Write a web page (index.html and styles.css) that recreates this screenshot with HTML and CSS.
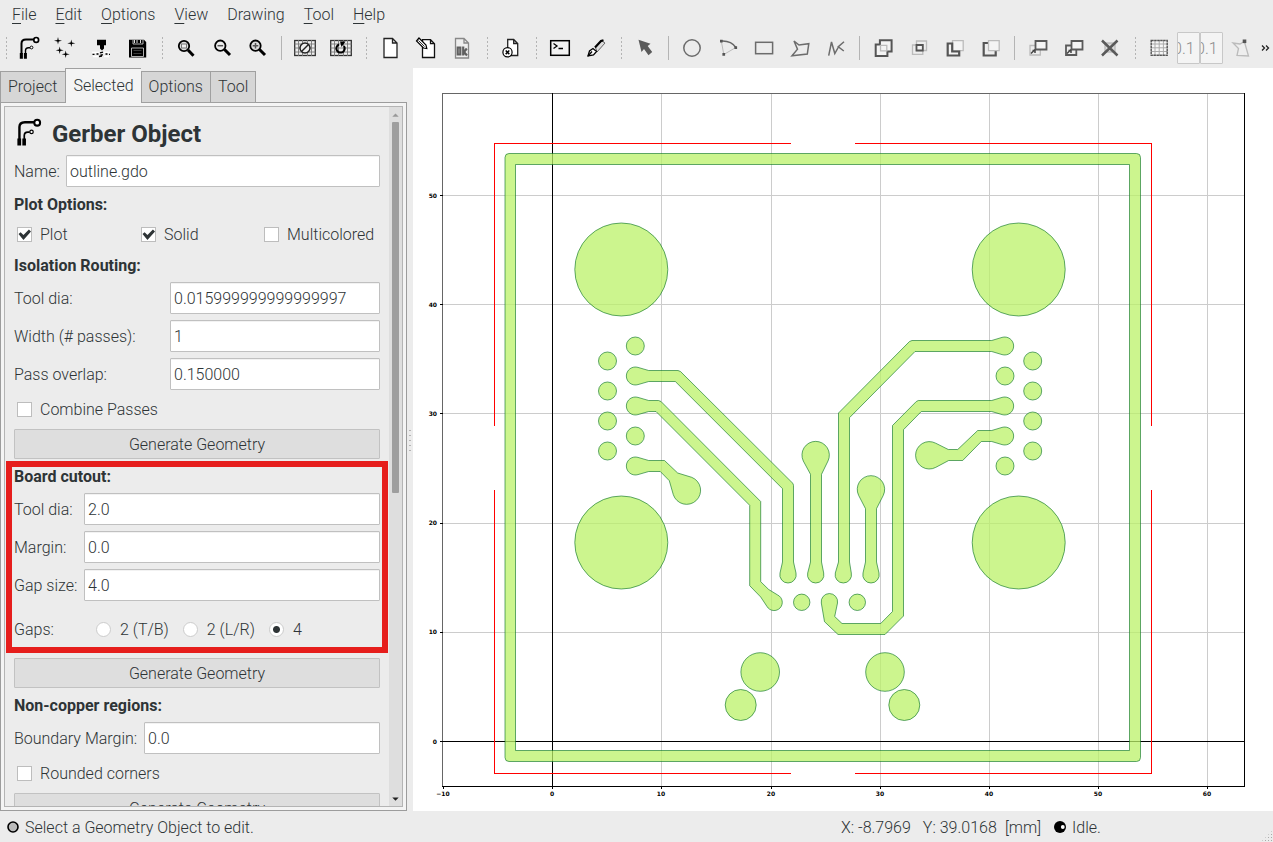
FILE: index.html
```html
<!DOCTYPE html>
<html lang="en">
<head>
<meta charset="utf-8">
<meta name="viewport" content="width=device-width, initial-scale=1">
<title>FlatCAM</title>
<link rel="stylesheet" href="styles.css">
</head>
<body>
<svg class="defs" aria-hidden="true">
  <defs>
    <symbol id="i-gerber" viewBox="0 0 24 24"><path d="M4.500 18V7.500q0-4 4.500-4H17" fill="none" stroke="#000" stroke-width="2"/><path d="M8.500 18v-3.500q0-2.800 3-2.800H13" fill="none" stroke="#000" stroke-width="1.400"/><circle cx="19.200" cy="3.900" r="2.400" fill="#fff" stroke="#000" stroke-width="1.700"/><circle cx="14.500" cy="11.500" r="1.400" fill="#fff" stroke="#000"/><path d="M2.800 17h3.100v5.700H2.800zM6.900 17h3v5.700h-3z"/></symbol>
    <symbol id="i-doc" viewBox="0 0 24 24"><path d="M6 2.500h8.500l4.500 4.500v14.500H6zM14.500 2.500V7H19" fill="#fff" stroke="currentColor" stroke-width="1.300"/></symbol>
    <symbol id="i-mesh" viewBox="0 0 24 24"><rect x="1.700" y="4.500" width="20.600" height="15" fill="#eee" stroke="#333" stroke-width="1.300"/><path d="M5.500 4v16M9.500 4v16M14.500 4v16M18.500 4v16M1.500 8h21M1.500 12h21M1.500 16h21" stroke="#777" stroke-width=".9"/></symbol>
  </defs>
</svg>

<nav class="menubar" aria-label="Menu">
  <button type="button"><u>F</u>ile</button>
  <button type="button"><u>E</u>dit</button>
  <button type="button"><u>O</u>ptions</button>
  <button type="button"><u>V</u>iew</button>
  <button type="button">Drawing</button>
  <button type="button"><u>T</u>ool</button>
  <button type="button"><u>H</u>elp</button>
</nav>

<div class="toolbar" role="toolbar" aria-label="Tools">
  <span class="grip"></span>
  <button type="button" aria-label="Open Gerber"><svg><use href="#i-gerber"/></svg></button>
  <button type="button" aria-label="Open Excellon"><svg viewBox="0 0 24 24"><path d="M5 1l.700 3L9 4.700l-3.300.7L5 8.500l-.7-3.100L1 4.700 4.300 4zM18.300 3.500l.7 3 3.300.7-3.300.7-.7 3.100-.7-3.100-3.300-.7 3.300-.7zM6.700 10.500l.7 3 3.300.7-3.300.7-.7 3.100-.7-3.100-3.300-.7 3.300-.7zM12.700 14.500l.7 3 3.300.7-3.300.7-.7 3.100-.7-3.100-3.300-.7 3.300-.7z"/></svg></button>
  <button type="button" aria-label="Open G-Code"><svg viewBox="0 0 24 24"><path d="M3 16.500h7M15 16.500h6M4 20.500h5m6 0h5" stroke="#fff" stroke-width="1.500"/><path d="M8 3.800h9v5.400h-2v3.300l-2 2-2-2V9.200H8z"/><path d="M3.500 18.300h2M7.500 18h2M11 16.800l3-.6M11.500 18.800H14M10 20.500l3-.5M16.500 18h2M20 18.300h1" stroke="#000" stroke-width="1.300"/></svg></button>
  <button type="button" aria-label="Save"><svg viewBox="0 0 24 24"><path d="M4 3.700h15l2.200 2.200v15.500H4z"/><path d="M8 4v4h10V4M6.500 12v8.500h12V12z" fill="none" stroke="#ddd" stroke-width=".8"/><path d="M9.500 4v3M12 4v3M15.500 4v3" stroke="#ddd"/><path d="M8.500 14.500h8m-8 3h8" stroke="#555" stroke-width=".7"/></svg></button>
  <span class="grip"></span>
  <button type="button" aria-label="Zoom fit"><svg viewBox="0 0 24 24"><path d="M14 14l5.500 5.700" stroke="#000" stroke-width="3"/><circle cx="10" cy="10" r="5.200" fill="#ddd" stroke="#000" stroke-width="1.800"/><rect x="7.500" y="8" width="5" height="4" fill="#eee" stroke="#777"/></svg></button>
  <button type="button" aria-label="Zoom out"><svg viewBox="0 0 24 24"><path d="M14.500 13.500L20 19" stroke="#000" stroke-width="3"/><circle cx="10.300" cy="9.700" r="5.200" fill="#eee" stroke="#000" stroke-width="1.800"/><path d="M7.500 9.700h5.600" stroke="#555" stroke-width="1.500"/></svg></button>
  <button type="button" aria-label="Zoom in"><svg viewBox="0 0 24 24"><path d="M13.500 13.500L19 19" stroke="#000" stroke-width="3"/><circle cx="9.500" cy="9.700" r="5.200" fill="#ddd" stroke="#000" stroke-width="1.800"/><path d="M6.700 9.700h5.600M9.500 6.900v5.600" stroke="#555" stroke-width="1.500"/></svg></button>
  <span class="sep"></span>
  <button type="button" aria-label="Clear plot"><svg viewBox="0 0 24 24"><use href="#i-mesh"/><circle cx="12" cy="12" r="5" fill="#eee" stroke="#222" stroke-width="1.500"/><path d="M8.500 15.500l7-7" stroke="#222" stroke-width="1.500"/></svg></button>
  <button type="button" aria-label="Replot"><svg viewBox="0 0 24 24"><use href="#i-mesh"/><path d="M10 8.500a4.200 4.200 0 1 0 5 1.500" fill="none" stroke="#000" stroke-width="2"/><path d="M11 5.500h5.500L12.500 11z"/></svg></button>
  <span class="grip"></span>
  <button type="button" aria-label="New geometry"><svg><use href="#i-doc"/></svg></button>
  <button type="button" aria-label="Edit geometry"><svg viewBox="0 0 24 24"><path d="M8.500 3.700h8l4 4v13.800h-12zM16.500 3.700v4h4" fill="#fff" stroke="#111" stroke-width="1.300"/><path d="M2.500 5l2.500-3 7 7 .8 3.500L9.500 12z" fill="#fff" stroke="#000" stroke-width="1.200"/><path d="M4.500 4.500l6 6" stroke="#000" stroke-width=".8"/></svg></button>
  <button type="button" disabled aria-label="Update geometry"><svg viewBox="0 0 24 24"><path d="M5.500 2.500h8.500l4.500 4.500v15h-13zM14 2.500V7h4.500" fill="#eee" stroke="#888" stroke-width="1.300"/><path d="M7.700 11.500h2.600v7H7.700zM13.200 10.500v9M16.800 12.500L14 16l3 3.500" fill="none" stroke="#606060" stroke-width="2.200"/></svg></button>
  <span class="grip"></span>
  <button type="button" aria-label="Delete object"><svg viewBox="0 0 24 24"><path d="M8.700 3.500h6l4 4v12h-10zM14.700 3.500v4h4" fill="#fff" stroke="#222" stroke-width="1.300"/><circle cx="8.500" cy="16.300" r="4.600" fill="#fff" stroke="#000" stroke-width="1.200"/><path d="M6.700 14.500l3.600 3.600m0-3.600l-3.600 3.600" stroke="#000" stroke-width="1.500"/></svg></button>
  <span class="grip"></span>
  <button type="button" aria-label="Command line"><svg viewBox="0 0 24 24"><rect x="2.700" y="4.700" width="18.600" height="14.600" fill="#f2f2f2" stroke="#000" stroke-width="1.500"/><path d="M5.500 7.500L9 10l-3.500 2.500M10.500 12.500h4.500" fill="none" stroke="#000" stroke-width="1.300"/></svg></button>
  <button type="button" aria-label="New script"><svg viewBox="0 0 24 24"><path d="M11.500 11.500L18 5l3 2-8 9z" fill="#ddd" stroke="#666"/><path d="M11 11.500L17 5l2.500-.7" fill="none" stroke="#000" stroke-width="2.200"/><path d="M4 20l1.500-5 3.500-2.500 3.500 3-3 3.500z" fill="#fff" stroke="#000" stroke-width="1.300"/><path d="M4 20l4-4.500" stroke="#000" stroke-width="1.300"/></svg></button>
  <span class="grip"></span>
  <button type="button" disabled aria-label="Select"><svg viewBox="0 0 24 24"><path d="M5.500 3.700l12 4-2.800 2.300 4.500 6-3.700 3.200-4.500-6.200-2.500 3z" fill="#5a5a5a"/></svg></button>
  <span class="sep"></span>
  <button type="button" disabled aria-label="Add circle"><svg viewBox="0 0 24 24"><circle cx="12" cy="12" r="8.200" fill="none" stroke="#6c6c6c" stroke-width="1.500"/></svg></button>
  <button type="button" disabled aria-label="Add arc"><svg viewBox="0 0 24 24"><path d="M5.300 5l2.500 13.500 12-7" fill="none" stroke="#bbb"/><path d="M5.300 5q10-.5 14.500 6.500" fill="none" stroke="#666" stroke-width="1.400"/><path d="M4 3.700h2.700v2.700H4zM18.400 10.200h2.700v2.700h-2.700zM6.400 17h2.700v2.700H6.400z" fill="#555"/></svg></button>
  <button type="button" disabled aria-label="Add rectangle"><svg viewBox="0 0 24 24"><rect x="3.600" y="6.300" width="17" height="11.400" fill="none" stroke="#6c6c6c" stroke-width="1.500"/></svg></button>
  <button type="button" disabled aria-label="Add polygon"><svg viewBox="0 0 24 24"><path d="M6 5l5 4 9.800-1.300L19.300 18 4 19.700l5.500-6.500z" fill="none" stroke="#6c6c6c" stroke-width="1.500"/></svg></button>
  <button type="button" disabled aria-label="Add path"><svg viewBox="0 0 24 24"><path d="M4.700 20L7.500 6l3.300 12L20 5.500M20 5.500l-6.500 5.500 6.500 4" fill="none" stroke="none"/><path d="M4.700 19.700L7.500 6l3.300 11.500L15 10M20 5.800l-5.700 5 5.500 4.200" fill="none" stroke="#6c6c6c" stroke-width="1.500"/></svg></button>
  <span class="sep"></span>
  <button type="button" disabled aria-label="Union"><svg viewBox="0 0 24 24"><path d="M4.700 8.500h4.200V4.200h11.700v11.300h-4.200v4.600H4.700z" fill="#f4f4f4" stroke="#555" stroke-width="2"/><path d="M9.500 9.300h6.300v5.500H9.500z" fill="none" stroke="#bbb" stroke-width="1.300"/></svg></button>
  <button type="button" disabled aria-label="Intersection"><svg viewBox="0 0 24 24"><path d="M5.500 9h10.300v9.300H5.500zM9.500 5h10v9.500h-10z" fill="#eee" stroke="#bbb" stroke-width="1.300"/><path d="M9.500 9h6.300v5.500H9.500z" fill="#f4f4f4" stroke="#555" stroke-width="1.800"/></svg></button>
  <button type="button" disabled aria-label="Subtraction"><svg viewBox="0 0 24 24"><path d="M9.500 4.700h10.700v10H9.500z" fill="#f4f4f4" stroke="#bbb" stroke-width="1.300"/><path d="M4.700 7.500h4.500v8h7v4H4.700z" fill="#f4f4f4" stroke="#555" stroke-width="2.200"/></svg></button>
  <button type="button" disabled aria-label="Cut path"><svg viewBox="0 0 24 24"><path d="M9 7H4.700v12.500h12V15" fill="#eee" stroke="#555" stroke-width="2.200"/><path d="M9.500 4.700h10.700v10H9.500z" fill="#f4f4f4" stroke="#bbb" stroke-width="1.300"/></svg></button>
  <span class="sep"></span>
  <button type="button" disabled aria-label="Copy objects"><svg viewBox="0 0 24 24"><path d="M4 9.500h10.300V19H4z" fill="#eee" stroke="#bbb" stroke-width="1.300"/><path d="M9.500 5h11v8.500h-11z" fill="#f4f4f4" stroke="#5a5a5a" stroke-width="1.800"/><path d="M5 17.500l4-4M6.500 14.500h2.500v2.500" stroke="#444" stroke-width="1.500" fill="none"/></svg></button>
  <button type="button" disabled aria-label="Move objects"><svg viewBox="0 0 24 24"><path d="M4 9.500h10.300V19H4z" fill="#eee" stroke="#5a5a5a" stroke-width="1.800"/><path d="M9.500 5h11v8.500h-11z" fill="#f4f4f4" stroke="#5a5a5a" stroke-width="1.800"/><path d="M5 17.500l4-4M6.500 14.500h2.500v2.500" stroke="#444" stroke-width="1.500" fill="none"/></svg></button>
  <button type="button" disabled aria-label="Delete shape"><svg viewBox="0 0 24 24"><path d="M7 7h10v9H7z" fill="#ddd" stroke="#aaa"/><path d="M4 4.500l15.500 15M19.500 4.500L4 19.500" stroke="#5a5a5a" stroke-width="2.500"/></svg></button>
  <span class="grip"></span>
  <button type="button" disabled aria-label="Snap to grid"><svg viewBox="0 0 24 24"><rect x="4.200" y="4.500" width="16" height="14.700" fill="#f6f6f6"/><path d="M8 4v15.500M12.200 4v15.500M16.400 4v15.500M4 8h16.500M4 11.800h16.500M4 15.500h16.500" stroke="#aaa"/><rect x="4.200" y="4.500" width="16" height="14.700" fill="none" stroke="#555" stroke-width="1.400" stroke-dasharray="2.500 .5"/></svg></button>
  <input class="snap" type="text" value="0.1" aria-label="Grid X" disabled>
  <input class="snap" type="text" value="0.1" aria-label="Grid Y" disabled>
  <button type="button" disabled aria-label="Snap to corner"><svg viewBox="0 0 24 24"><path d="M14.500 6l-3.500 2-7-1 5.500 5.500L8 19.500l11.500.5L15.500 6" fill="#eee" stroke="#bbb" stroke-width="1.300"/><path d="M13.700 3.500h3.600v3.600h-3.600z" fill="#555"/></svg></button>
  <button class="more" type="button" aria-label="More"><svg viewBox="0 0 12 12"><path d="M2 3.500L4.500 6 2 8.500M6 3.500L8.500 6 6 8.500" fill="none" stroke="#222" stroke-width="1.300"/></svg></button>
</div>

<main class="work">
  <section class="side">
    <div class="tabs" role="tablist">
      <button type="button" role="tab">Project</button>
      <button type="button" role="tab" class="active" aria-selected="true">Selected</button>
      <button type="button" role="tab">Options</button>
      <button type="button" role="tab">Tool</button>
    </div>
    <div class="pane">
      <div class="frame">
        <form class="form">
          <h1><svg class="logo"><use href="#i-gerber"/></svg>Gerber Object</h1>
          <div class="row name"><label for="name">Name:</label><input id="name" type="text" value="outline.gdo"></div>
          <h2>Plot Options:</h2>
          <div class="checks">
            <label class="opt"><input type="checkbox" checked>Plot</label>
            <label class="opt"><input type="checkbox" checked>Solid</label>
            <label class="opt"><input type="checkbox">Multicolored</label>
          </div>
          <h2>Isolation Routing:</h2>
          <div class="row wide"><label for="iso-dia">Tool dia:</label><input id="iso-dia" type="text" value="0.015999999999999997"></div>
          <div class="row wide"><label for="passes">Width (# passes):</label><input id="passes" type="text" value="1"></div>
          <div class="row wide"><label for="overlap">Pass overlap:</label><input id="overlap" type="text" value="0.150000"></div>
          <label class="opt"><input type="checkbox">Combine Passes</label>
          <button type="button">Generate Geometry</button>
          <section class="cutout">
            <h2>Board cutout:</h2>
            <div class="row cut"><label for="cut-dia">Tool dia:</label><input id="cut-dia" type="text" value="2.0"></div>
            <div class="row cut"><label for="margin">Margin:</label><input id="margin" type="text" value="0.0"></div>
            <div class="row cut"><label for="gap">Gap size:</label><input id="gap" type="text" value="4.0"></div>
            <div class="row cut gaps" role="radiogroup" aria-labelledby="gaps-label">
              <span id="gaps-label">Gaps:</span>
              <div class="radios">
                <label class="opt"><input type="radio" name="gaps">2 (T/B)</label>
                <label class="opt"><input type="radio" name="gaps">2 (L/R)</label>
                <label class="opt"><input type="radio" name="gaps" checked>4</label>
              </div>
            </div>
          </section>
          <button type="button">Generate Geometry</button>
          <h2>Non-copper regions:</h2>
          <div class="row bound"><label for="bound">Boundary Margin:</label><input id="bound" type="text" value="0.0"></div>
          <label class="opt"><input type="checkbox">Rounded corners</label>
          <button type="button">Generate Geometry</button>
        </form>
        <div class="scroll" aria-hidden="true">
          <svg viewBox="0 0 12 14"><path d="M3 9h6L6 6z" fill="#999"/></svg>
          <div class="track"><div class="thumb"></div></div>
          <svg viewBox="0 0 12 14"><path d="M3 6h6L6 9z" fill="#222"/></svg>
        </div>
      </div>
    </div>
  </section>
  <div class="splitter"></div>
  <section class="plot">
    <svg viewBox="413 68 860 743" role="img" aria-label="Board plot">
      <g class="grid">
        <path d="M661.500 93V786M771.500 93V786M880.500 93V786M989.500 93V786M1098.500 93V786M1207.500 93V786M443 632.500H1244M443 523.500H1244M443 413.500H1244M443 304.500H1244M443 195.500H1244"/>
      </g>
      <g class="axes">
        <path class="soft" d="M442.500 786V93.500H1244"/>
        <path d="M552.500 93V786M443 741.500H1244M442 786.500H1244.500V93"/>
        <path d="M443.500 786v3M552.500 786v3M661.500 786v3M771.500 786v3M880.500 786v3M989.500 786v3M1098.500 786v3M1207.500 786v3M440 195.500h3M440 304.500h3M440 413.500h3M440 523.500h3M440 632.500h3M440 741.500h3"/>
      </g>
      <g class="ticks">
        <text x="443" y="796">−10</text><text x="552" y="796">0</text><text x="661" y="796">10</text><text x="771" y="796">20</text><text x="880" y="796">30</text><text x="989" y="796">40</text><text x="1098" y="796">50</text><text x="1207" y="796">60</text>
      </g>
      <g class="ticks left">
        <text x="437" y="198">50</text><text x="437" y="307">40</text><text x="437" y="416">30</text><text x="437" y="525">20</text><text x="437" y="634">10</text><text x="437" y="744">0</text>
      </g>
      <path class="cut-line" d="M791 143.500H494.500V426M494.500 490V773.500H791M855 143.500H1151.500V426M1151.500 490V773.500H855"/>
      <g class="copper">
        <path fill-rule="evenodd" d="M509 153.500H1136.500q4 0 4 4V757.500q0 4-4 4H509q-4 0-4-4V157.500q0-4 4-4zM515.500 164.500V750.500H1129.500V164.500z"/>
        <circle cx="621.300" cy="269.500" r="46.500"/><circle cx="621.300" cy="542.500" r="46.500"/><circle cx="1018.700" cy="269.500" r="46.500"/><circle cx="1018.700" cy="542.500" r="46.500"/>
        <circle cx="607.500" cy="361" r="9"/><circle cx="607.500" cy="391" r="9"/><circle cx="607.500" cy="421" r="9"/><circle cx="607.500" cy="451" r="9"/>
        <circle cx="635.300" cy="346" r="9"/><circle cx="635.300" cy="436" r="9"/>
        <circle cx="1032.700" cy="361" r="9"/><circle cx="1032.700" cy="391" r="9"/><circle cx="1032.700" cy="421" r="9"/><circle cx="1032.700" cy="451" r="9"/>
        <circle cx="1005" cy="376" r="9"/><circle cx="1005" cy="466" r="9"/>
        <circle cx="801.700" cy="602.300" r="8.200"/><circle cx="857.300" cy="602.300" r="8.200"/>
        <circle cx="760.200" cy="672" r="19.300"/><circle cx="740.700" cy="705" r="15.500"/><circle cx="885" cy="672" r="19.300"/><circle cx="904.300" cy="705" r="15.500"/>
        <path d="M638 367.400L648.700 370.500H678l2.500 1L793 483.500l.5 2V562L796 573A8.200 8.200 0 1 1 780 573L782.500 562V488.700L675.300 381.500H648.700L638 384.600A9 9 0 1 1 638 367.400z"/>
        <path d="M638 397.400L648.700 400.500H658.500l2.500 1L760.700 501.500V581.700L768.700 589.500L777.700 595A8.200 8.200 0 1 1 767 606.500L760.700 597L749.700 585.700V505.300L656 411.500H648.700L638 414.600A9 9 0 1 1 638 397.400z"/>
        <path d="M638 457.400L648.700 460.500H664.500L677.700 473L691.700 477.300A14 14 0 1 1 673.300 494.700L669.300 480.700L660.300 471.500H648.700L638 474.600A9 9 0 1 1 638 457.400z"/>
        <path d="M803.300 461L810.500 474.300V562L807.700 573A8.200 8.200 0 1 0 823.700 573L821.500 562V474.300L828 461A13.700 13.700 0 1 0 803.300 461z"/>
        <path d="M858.600 495.300L865.500 508.700V562L863 573A8.200 8.200 0 1 0 879 573L876.500 562V508.700L883.300 495.300A13.700 13.700 0 1 0 858.600 495.300z"/>
        <path d="M1002 337.400L991.700 340.500H912l-2.500 1L838.500 413V562L835.300 573A8.200 8.200 0 1 0 851.300 573L849.500 562V417.700L915 351.500H991.700L1002 354.600A9 9 0 1 0 1002 337.400z"/>
        <path d="M1002 397.400L991.700 400.500H918.300l-2 1L892.500 425.500V611.500L880.700 623.500H842L834.700 616.500L837.500 603A8.200 8.200 0 1 0 821.300 603L824.500 621.700L838 634.500H885L903.500 616V429.700L921.300 411.500H991.700L1002 414.600A9 9 0 1 0 1002 397.400z"/>
        <path d="M1002 427.400L991.700 430.500H977.700L957.700 449.500H948.300L935.700 443.200A13.700 13.700 0 1 0 935.700 467.400L948.700 460.500H962.700L981.300 441.500H991.700L1002 444.600A9 9 0 1 0 1002 427.400z"/>
      </g>
    </svg>
  </section>
</main>

<footer class="status">
  <div class="message"><svg viewBox="0 0 12 12"><circle cx="6" cy="6" r="5" fill="#bbb" stroke="#000" stroke-width="1.600"/></svg><span>Select a Geometry Object to edit.</span></div>
  <div class="coords"><span>X: -8.7969</span><span>Y: 39.0168</span></div>
  <span class="units">[mm]</span>
  <div class="activity"><svg viewBox="0 0 12 12"><circle cx="6" cy="6" r="6"/><circle cx="8.800" cy="6" r="1.900" fill="#fff"/></svg><span>Idle.</span></div>
  <span class="resize" aria-hidden="true"></span>
</footer>
</body>
</html>
```
FILE: styles.css
```css
* { box-sizing: border-box; }

body {
  margin: 0;
  height: 100vh;
  display: flex;
  flex-direction: column;
  overflow: hidden;
  background: #ececec;
  color: #2e3436;
  font: 300 16px/20px Roboto, "Liberation Sans", sans-serif;
}

button, input {
  font: inherit;
  color: inherit;
}

.defs { position: absolute; width: 0; height: 0; }

/* Menu and toolbar */
.menubar { display: flex; gap: 1px; padding: 5px 3px 3px; }
.menubar button {
  border: 0;
  padding: 0 9px;
  background: none;
}
.menubar u { text-underline-offset: 3px; }

.toolbar {
  display: flex;
  align-items: center;
  height: 40px;
  overflow: hidden;
}
.toolbar button {
  display: flex;
  flex: 0 0 36px;
  height: 36px;
  align-items: center;
  justify-content: center;
  border: 0;
  padding: 0;
  background: none;
}
.toolbar svg { width: 24px; height: 24px; color: #222; }
.grip {
  flex: 0 0 13px;
  height: 24px;
  background: radial-gradient(circle, #b4b4b4 1px, transparent 1px) 1px 0 / 13px 4px repeat-y;
}
.grip:first-child { flex-basis: 11px; background-position: 0 0; }
.sep { flex: 0 0 11px; height: 24px; background: linear-gradient(#b4b4b4, #b4b4b4) center / 1px 24px no-repeat; }
.snap {
  flex: 0 0 23px;
  width: 23px;
  height: 32px;
  border: 1px solid #c8c8c8;
  border-radius: 1px;
  padding: 0;
  background: #f4f4f4;
  color: #8c8c8c;
  text-indent: -5px;
}
.toolbar .more { flex: 0 0 14px; }
.toolbar .more svg { width: 12px; height: 12px; }

/* Side panel */
.work { display: flex; flex: 1; min-height: 0; }
.side { display: flex; flex: 0 0 407px; flex-direction: column; min-height: 0; }
.tabs { display: flex; align-items: flex-end; height: 35px; z-index: 1; }
.tabs button {
  height: 32px;
  border: 1px solid #a0a0a0;
  border-right-width: 0;
  padding: 0 7px;
  background: #d6d6d6;
}
.tabs button:first-child { padding-right: 8px; }
.tabs button:last-child { border-right-width: 1px; }
.tabs .active {
  height: 35px;
  border-bottom: 0;
  background: #f4f4f4;
}
.pane {
  display: flex;
  flex: 1;
  min-height: 0;
  margin-top: -1px;
  border: 1px solid #9c9c9c;
  padding: 3px;
  background: #f4f4f4;
}
.frame {
  display: flex;
  flex: 1;
  min-width: 0;
  border: 1px solid #b4b4b4;
  background: #ececec;
  overflow: hidden;
}
.form {
  display: flex;
  flex: 1;
  flex-direction: column;
  gap: 6px;
  min-width: 0;
  padding: 8px 9px 0;
}
.form > * { flex-shrink: 0; }
h1, h2 { margin: 0; font-weight: 700; }
h1 {
  display: flex;
  align-items: center;
  gap: 9px;
  height: 34px;
  padding-top: 3px;
  font-size: 24px;
}
.logo { width: 29px; height: 29px; margin-top: -3px; }
h2 { height: 22px; padding-top: 2px; font-size: 16px; }

.row { display: grid; align-items: center; }
.row > label { padding-top: 2px; }
.name { grid-template-columns: 52px 1fr; }
.wide { grid-template-columns: 156px 1fr; }
.cut { grid-template-columns: 70px 1fr; }
.bound { grid-template-columns: 130px 1fr; }
.row input[type="text"] {
  width: 100%;
  min-width: 0;
  height: 32px;
  border: 1px solid #c0c0c0;
  border-radius: 1px;
  padding: 0 3px;
  background: #fff;
  box-shadow: inset 0 1px #f2f2f2;
}
.form > button {
  height: 30px;
  border: 1px solid #c2c2c2;
  border-radius: 1px;
  padding: 1px 0 0;
  background: #dedede;
}

.checks { display: grid; grid-template-columns: 124px 123px 1fr; }
.opt { display: flex; align-items: center; height: 27px; padding-left: 3px; white-space: nowrap; }
.opt input {
  flex: none;
  appearance: none;
  width: 15px;
  height: 15px;
  margin: 0 8px 0 0;
  border: 1px solid #bdbdbd;
  background: #fff;
}
.opt input[type="checkbox"]:checked::before {
  content: "";
  display: block;
  height: 13px;
  background: #2e3436;
  clip-path: polygon(4% 46%, 20% 32%, 42% 54%, 84% 12%, 100% 26%, 42% 92%);
}
.opt input[type="radio"] { border-color: #ccc; border-radius: 50%; margin-right: 9px; }
.opt input[type="radio"]:checked { background: radial-gradient(circle, #2e3436 3px, #fff 4px); }

.cutout { position: relative; display: flex; flex-direction: column; gap: 6px; }
.cutout::after {
  content: "";
  position: absolute;
  inset: -4px -8px -1px;
  border: 6px solid #e61e1c;
  pointer-events: none;
}
.gaps { height: 45px; }
.radios { display: flex; gap: 11px; padding-left: 9px; }

.scroll { display: flex; flex: 0 0 13px; flex-direction: column; background: #dedede; }
.scroll svg { width: 13px; height: 15px; }
.track { flex: 1; padding: 0 3px; }
.thumb { height: 55.4%; border-radius: 1px; background: #9e9e9e; }

.splitter {
  flex: 0 0 6px;
  background: linear-gradient(#ececec, #ececec 358px, transparent 358px, transparent 384px, #ececec 384px),
    radial-gradient(circle, #b4b4b4 1px, transparent 1px) 0 0 / 6px 5px repeat-y;
}

/* Plot */
.plot { flex: 1; min-width: 0; background: #fff; }
.plot svg { display: block; width: 100%; height: 100%; }
.grid, .axes, .cut-line { fill: none; shape-rendering: crispEdges; }
.grid { stroke: #ccc; }
.axes { stroke: #000; }
.soft { stroke: #666; }
.cut-line { stroke: #f00; }
.copper { fill: #bbf268; fill-opacity: .75; stroke: #006e20; stroke-opacity: .6; }
.ticks { font: 700 6px "DejaVu Sans", sans-serif; fill: #000; text-anchor: middle; }
.left { text-anchor: end; }

/* Status bar */
.status { display: flex; align-items: center; height: 31px; }
.status span { padding-top: 2px; }
.status svg { width: 12px; height: 12px; }
.message { display: flex; flex: 1; align-items: center; gap: 6px; padding-left: 7px; }
.coords { display: flex; flex: 0 0 164px; gap: 12px; white-space: pre; }
.units { flex: 0 0 49px; }
.activity { display: flex; flex: 0 0 207px; align-items: center; gap: 6px; }
.resize {
  align-self: flex-end;
  flex: 0 0 12px;
  height: 12px;
  background: radial-gradient(circle, #aaa 1px, transparent 1px) 0 0 / 3px 3px;
  clip-path: polygon(100% 0, 100% 100%, 0 100%);
}
```
